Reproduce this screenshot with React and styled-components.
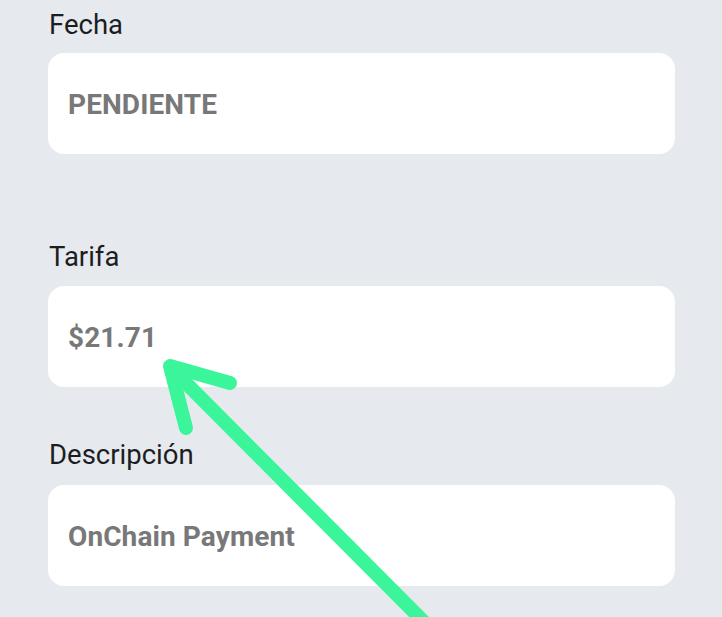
import React from 'react';
import styled, { createGlobalStyle } from 'styled-components';

const GlobalStyle = createGlobalStyle`
    html, body {
        margin: 0;
        padding: 0;
        background-color: #e6eaef;
        font-family: Roboto, "Noto Sans", sans-serif;
        overflow: hidden;
    }
`

const Page = styled.div`
    position: relative;
    width: 722px;
    height: 617px;
    padding: 10px 47px 0 48px;
    box-sizing: border-box;
    display: flex;
    flex-direction: column;
`

const Field = styled.div`
    display: flex;
    flex-direction: column;
    margin-bottom: ${props => props.gap || 0}px;
`

const Label = styled.div`
    font-size: 27.5px;
    line-height: 30px;
    color: #1d1d1f;
    margin-bottom: ${props => props.below || 13}px;
    padding-left: 1px;
`

const Box = styled.div`
    height: 101px;
    background-color: #ffffff;
    border-radius: 16px;
    display: flex;
    align-items: center;
    padding: 2px 20px 0;
    box-sizing: border-box;
`

const Value = styled.span`
    font-size: 28px;
    font-weight: bold;
    color: #787878;
    letter-spacing: 0.1px;
`

const Arrow = styled.svg`
    position: absolute;
    left: 0;
    top: 0;
    pointer-events: none;
`

export default function App() {
    return (
        <>
            <GlobalStyle />
            <Page>
                <Field gap={88}>
                    <Label below={13}>Fecha</Label>
                    <Box><Value>PENDIENTE</Value></Box>
                </Field>
                <Field gap={53}>
                    <Label below={14}>Tarifa</Label>
                    <Box><Value>$21.71</Value></Box>
                </Field>
                <Field>
                    <Label below={15}>Descripción</Label>
                    <Box><Value>OnChain Payment</Value></Box>
                </Field>
                <Arrow width="722" height="617" viewBox="0 0 722 617">
                    <g stroke="#3af59a" strokeWidth="14" strokeLinecap="round" strokeLinejoin="round" fill="none">
                        <line x1="172" y1="369" x2="432" y2="630" />
                        <polyline points="230,383 170,366 186,428" />
                    </g>
                </Arrow>
            </Page>
        </>
    );
}
